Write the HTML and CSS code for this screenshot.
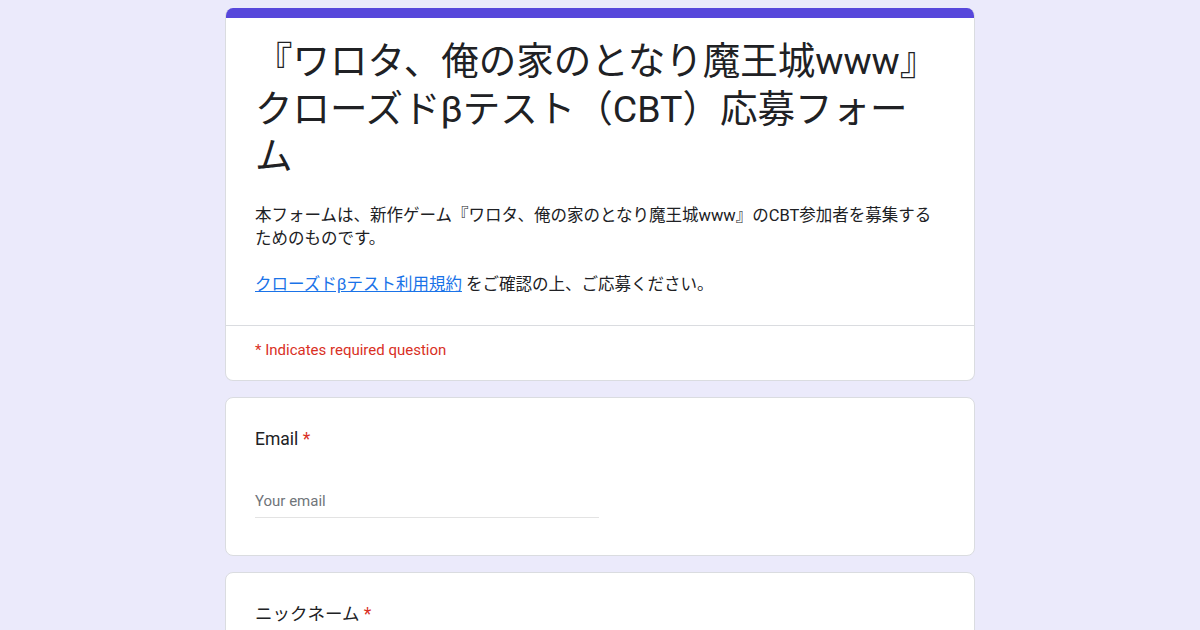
FILE: index.html
```html
<!DOCTYPE html>
<html lang="ja">
<head>
<meta charset="utf-8">
<title>応募フォーム</title>
<link rel="stylesheet" href="styles.css">
</head>
<body>
<div class="page">
  <div class="card header-card">
    <div class="bar"></div>
    <div class="head-main">
      <h1 class="title">『ワロタ、俺の家のとなり魔王城www』クローズドβテスト（CBT）応募フォーム</h1>
      <div class="desc">
        <p>本フォームは、新作ゲーム『ワロタ、俺の家のとなり魔王城www』のCBT参加者を募集するためのものです。</p>
        <p class="blank">&nbsp;</p>
        <p><a class="link" href="#">クローズドβテスト利用規約</a> をご確認の上、ご応募ください。</p>
      </div>
    </div>
    <div class="required">* Indicates required question</div>
  </div>

  <div class="card question">
    <div class="q-label">Email <span class="star">*</span></div>
    <div class="input">Your email</div>
  </div>

  <div class="card question">
    <div class="q-label">ニックネーム <span class="star">*</span></div>
    <div class="input">Your answer</div>
  </div>
</div>
</body>
</html>
```

FILE: styles.css
```css
html, body {
  margin: 0;
  padding: 0;
}
body {
  background: #ebeafb;
  font-family: Roboto, "Noto Sans CJK JP", "Noto Sans", sans-serif;
  color: #202124;
  overflow: hidden;
}
.page {
  width: 750px;
  margin: 0 auto;
  padding-top: 8px;
  display: flex;
  flex-direction: column;
  gap: 16px;
}
.card {
  background: #ffffff;
  border: 1px solid #dadce0;
  border-radius: 8px;
}
.header-card {
  overflow: hidden;
  border-top: none;
}
.bar {
  height: 10px;
  background: #5747db;
  margin: 0 -1px;
}
.head-main {
  padding: 20px 30px 29px 29px;
}
.title {
  margin: 0;
  font-size: 37.5px;
  line-height: 47.5px;
  font-weight: 400;
  color: #202124;
  font-family: Roboto, "Noto Sans CJK JP", sans-serif;
  max-width: 688px;
}
.desc {
  margin-top: 23px;
  font-size: 16.5px;
  line-height: 23px;
}
.desc p {
  margin: 0;
}
.link {
  color: #1a73e8;
  text-decoration: underline;
}
.required {
  border-top: 1px solid #dadce0;
  padding: 14px 30px 20px 29px;
  font-size: 15px;
  line-height: 20px;
  color: #d93025;
}
.question {
  padding: 29px 30px 37px 29px;
}
.q-label {
  font-size: 17.5px;
  line-height: 24px;
  color: #202124;
}
.star {
  color: #d93025;
}
.input {
  margin-top: 40px;
  width: 344px;
  padding-bottom: 6px;
  border-bottom: 1px solid #e3e3e3;
  font-size: 15px;
  line-height: 20px;
  color: #70757a;
}
```
